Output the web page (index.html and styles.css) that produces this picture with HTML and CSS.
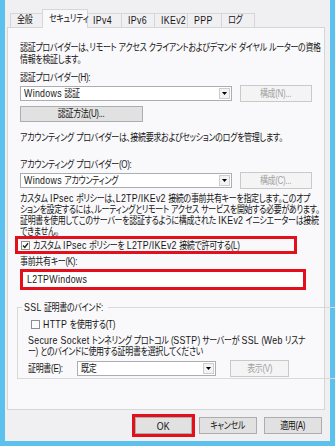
FILE: index.html
```html
<!DOCTYPE html>
<html lang="ja">
<head>
<meta charset="utf-8">
<link rel="stylesheet" href="styles.css">
</head>
<body>
<div class="frame">
  <div class="dialog">
    <div class="tabs">
      <div class="tab t1"><span class="s">全般</span></div>
      <div class="tab sel"><span class="s">セキュリティ</span></div>
      <div class="tab t3"><span class="s en">IPv4</span></div>
      <div class="tab t4"><span class="s en">IPv6</span></div>
      <div class="tab t5"><span class="s en">IKEv2</span></div>
      <div class="tab t6"><span class="s en">PPP</span></div>
      <div class="tab t7"><span class="s">ログ</span></div>
    </div>
    <div class="panel">
      <p class="line first">認証プロバイダーは、リモート アクセス クライアントおよびデマンド ダイヤル ルーターの資格</p>
      <p class="line">情報を検証します。</p>
      <p class="line label-h">認証プロバイダー(H):</p>
      <div class="row">
        <div class="select wide"><span class="s"><span class="en">Windows</span> 認証</span><span class="arrow"><svg width="5" height="3" viewBox="0 0 5 3"><path d="M0 0H5L2.5 3Z" fill="#000"/></svg></span></div>
        <div class="btn dis cfg"><span class="s">構成(N)...</span></div>
      </div>
      <div class="btn auth"><span class="s">認証方法(U)...</span></div>
      <p class="line acct">アカウンティング プロバイダーは、接続要求およびセッションのログを管理します。</p>
      <p class="line label-o">アカウンティング プロバイダー(O):</p>
      <div class="row">
        <div class="select wide"><span class="s"><span class="en">Windows</span> アカウンティング</span><span class="arrow"><svg width="5" height="3" viewBox="0 0 5 3"><path d="M0 0H5L2.5 3Z" fill="#000"/></svg></span></div>
        <div class="btn dis cfg"><span class="s">構成(C)...</span></div>
      </div>
      <div class="para">
        <p class="pl">カスタム <span class="en">IPsec</span> ポリシーは、<span class="en">L2TP/IKEv2</span> 接続の事前共有キーを指定します。このオプ</p>
        <p class="pl">ションを設定するには、ルーティングとリモート アクセス サービスを開始する必要があります。</p>
        <p class="pl">証明書を使用してこのサーバーを認証するように構成された <span class="en">IKEv2</span> イニシエーターは接続</p>
        <p class="pl">できません。</p>
      </div>
      <div class="redbox chkbox">
        <span class="check"><svg width="9" height="9" viewBox="0 0 9 9"><rect x="0.5" y="0.5" width="8" height="8" fill="#fff" stroke="#8e8f8f"/><path d="M2 4.5L3.8 6.4L7 2.3" fill="none" stroke="#222" stroke-width="1.4"/></svg></span>
        <span class="s">カスタム <span class="en">IPsec</span> ポリシーを <span class="en">L2TP/IKEv2</span> 接続で許可する(L)</span>
      </div>
      <p class="line label-k">事前共有キー(K):</p>
      <div class="redbox keybox"><span class="s en">L2TPWindows</span></div>
      <fieldset class="group">
        <legend class="legend"><span class="s"><span class="en">SSL</span> 証明書のバインド:</span></legend>
        <div class="httprow">
          <span class="check"><svg width="9" height="9" viewBox="0 0 9 9"><rect x="0.5" y="0.5" width="8" height="8" fill="#fff" stroke="#8e8f8f"/></svg></span>
          <span class="s"><span class="en">HTTP</span> を使用する(T)</span>
        </div>
        <p class="pl sstp1"><span class="en">Secure Socket</span> トンネリング プロトコル (<span class="en">SSTP</span>) サーバーが <span class="en">SSL</span> (<span class="en">Web</span> リスナ</p>
        <p class="pl">ー) とのバインドに使用する証明書を選択してください</p>
        <div class="row certrow">
          <span class="certlabel"><span class="s">証明書(E):</span></span>
          <div class="select cert"><span class="s">既定</span><span class="arrow"><svg width="5" height="3" viewBox="0 0 5 3"><path d="M0 0H5L2.5 3Z" fill="#000"/></svg></span></div>
          <div class="btn dis show"><span class="s">表示(V)</span></div>
        </div>
      </fieldset>
    </div>
    <div class="footer">
      <div class="redbox okbox"><div class="btn ok"><span class="s en">OK</span></div></div>
      <div class="btn cancel"><span class="s">キャンセル</span></div>
      <div class="btn apply"><span class="s">適用(A)</span></div>
    </div>
  </div>
</div>
</body>
</html>
```

FILE: styles.css
```css
* { box-sizing: border-box; }
html, body { margin: 0; padding: 0; }
body {
  background: #5cc1ec;
  font-family: "Liberation Sans", "Noto Sans CJK JP", sans-serif;
  font-size: 10px;
  font-feature-settings: "palt";
  letter-spacing: -0.4px;
  word-spacing: 0.5px;
  color: #151515;
}
.en {
  font-family: "Liberation Sans", "Noto Sans CJK JP", sans-serif;
  font-size: 11px;
  letter-spacing: 0.4px;
  word-spacing: 0;
}
.s {
  display: inline-block;
  white-space: nowrap;
  transform: scaleX(0.8);
  transform-origin: 0 50%;
}
p { margin: 0; }
.frame {
  width: 335px;
  height: 446px;
  padding: 0 5px 5px 5px;
  overflow: hidden;
}
.dialog {
  height: 441px;
  background: #f0eff2;
  padding: 9px 5px 0 2px;
}
.tabs {
  display: flex;
  align-items: flex-end;
  height: 18px;
  padding-left: 3px;
  position: relative;
  z-index: 1;
}
.tab {
  height: 14px;
  border: 1px solid #d6d6d6;
  border-bottom: none;
  margin-right: -1px;
  padding-left: 6px;
  line-height: 12px;
  background: #f0eff2;
  white-space: nowrap;
}
.t1 { width: 34px; }
.t3 { width: 36px; }
.t4 { width: 34px; }
.t5 { width: 34px; }
.t6 { width: 35px; }
.t7 { width: 34px; }
.tab.sel {
  width: 46px;
  height: 19px;
  margin: 0 -2px -1px -1px;
  background: #f9f8fa;
  padding-top: 3px;
  position: relative;
}
.panel {
  height: 383px;
  border: 1px solid #d6d6d6;
  background: #f9f8fa;
  padding: 0 12px;
}
.line, .pl {
  white-space: nowrap;
  transform: scaleX(0.8);
  transform-origin: 0 50%;
}
.line { line-height: 12px; }
.first { margin-top: 14px; }
.label-h { margin-top: 6px; }
.row {
  display: flex;
  align-items: center;
  height: 17px;
  margin-top: 1px;
}
.select {
  height: 15px;
  border: 1px solid #abadb3;
  background: #fff;
  display: flex;
  align-items: center;
  justify-content: space-between;
  padding: 0 1px 0 3px;
  line-height: 12px;
  white-space: nowrap;
}
.select.wide { width: 212px; }
.arrow {
  width: 11px;
  height: 11px;
  border: 1px solid #cdcdcd;
  background: #f3f3f3;
  display: flex;
  align-items: center;
  justify-content: center;
  flex: none;
}
.arrow svg { display: block; }
.btn {
  height: 17px;
  border: 1px solid #adadad;
  background: #e1e1e1;
  display: flex;
  align-items: center;
  justify-content: center;
  line-height: 12px;
  white-space: nowrap;
}
.btn .s { transform-origin: 50% 50%; }
.btn.dis {
  border-color: #c9c9c9;
  background: #f4f4f4;
  color: #a2a2a2;
}
.cfg { width: 72px; margin-left: 8px; }
.auth { width: 123px; height: 16px; margin-top: 4px; }
.acct { margin-top: 10px; }
.label-o { margin-top: 15px; }
.para { margin-top: 4px; }
.pl { line-height: 11px; }
.redbox { border: 3px solid #e3101b; }
.chkbox {
  margin: -1px 0 0 -5px;
  width: 282px;
  height: 18px;
  display: flex;
  align-items: center;
  padding-left: 3px;
  line-height: 12px;
  white-space: nowrap;
}
.check { display: flex; align-items: center; margin-right: 3px; flex: none; }
.check svg { display: block; }
.label-k { margin-top: 2px; }
.keybox {
  margin-top: 1px;
  width: 286px;
  height: 21px;
  background: #fff;
  padding-left: 4px;
  line-height: 15px;
}
.group {
  margin: 11px 0 0 -3px;
  width: 291px;
  height: 78px;
  border: 1px solid #d9d9d9;
  padding: 0 0 0 10px;
}
.legend {
  width: 86px;
  padding: 0 2px;
  margin-left: -6px;
  line-height: 12px;
  white-space: nowrap;
}
.httprow {
  display: flex;
  align-items: center;
  height: 12px;
  margin-top: 4px;
  padding-left: 3px;
  line-height: 12px;
}
.httprow .check { margin-right: 3px; }
.sstp1 { margin-top: 5px; }
.certrow { margin-top: 3px; }
.certlabel { width: 49px; line-height: 12px; flex: none; }
.select.cert { width: 139px; }
.show { width: 59px; margin-left: 14px; }
.footer {
  height: 31px;
  display: flex;
  align-items: center;
  justify-content: flex-end;
  padding-right: 3px;
}
.okbox { margin-right: 4px; }
.ok { width: 57px; }
.cancel { width: 58px; margin-right: 7px; }
.apply { width: 58px; }
```
